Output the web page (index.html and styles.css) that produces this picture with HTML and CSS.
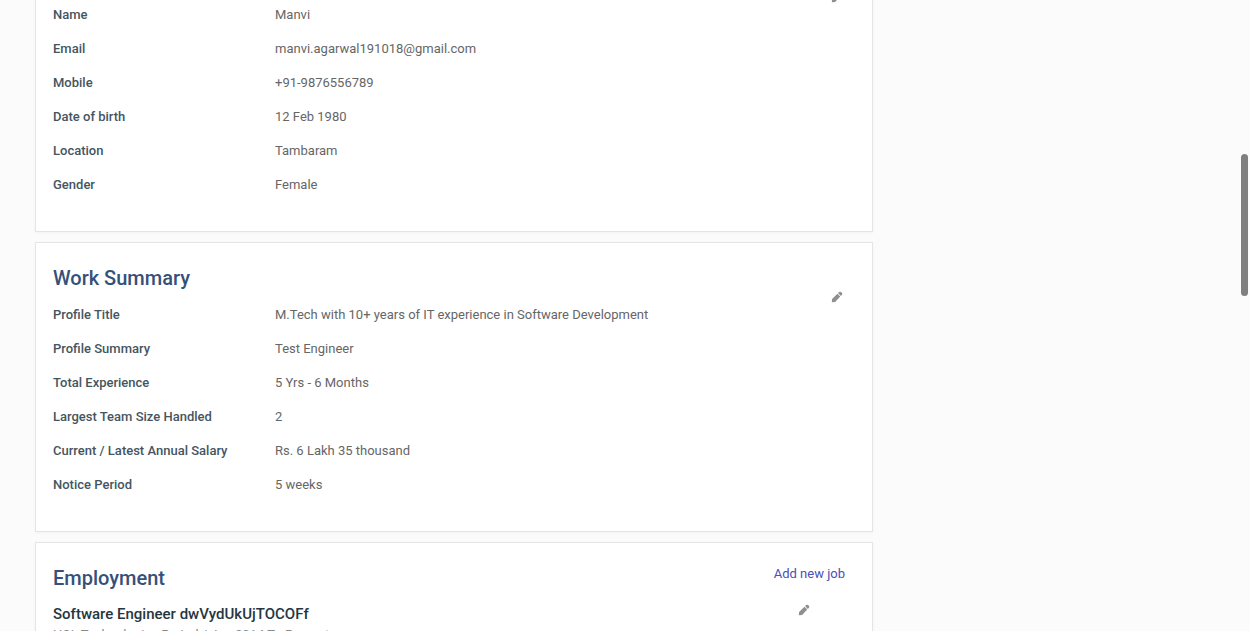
FILE: index.html
```html
<!DOCTYPE html>
<html lang="en">
<head>
<meta charset="utf-8">
<title>Profile</title>
<link rel="stylesheet" href="styles.css">
</head>
<body>
<svg class="defs"><symbol id="pencil" viewBox="0 0 12 12"><path d="M.8 11.2 1.1 7.9 6.4 2.7 9.3 5.6 4.1 10.9ZM7 2.1 8.3 1Q9.3.4 10.1 1.1L11 2Q11.7 2.8 11 3.7L9.9 5Z"/></symbol></svg>
<main class="profile">
  <section class="card personal">
    <dl class="rows">
      <dt>Name</dt><dd>Manvi</dd>
      <dt>Email</dt><dd>manvi.agarwal191018@gmail.com</dd>
      <dt>Mobile</dt><dd>+91-9876556789</dd>
      <dt>Date of birth</dt><dd>12 Feb 1980</dd>
      <dt>Location</dt><dd>Tambaram</dd>
      <dt>Gender</dt><dd>Female</dd>
    </dl>
    <svg class="edit"><use href="#pencil"/></svg>
  </section>
  <section class="card summary">
    <h2>Work Summary</h2>
    <dl class="rows">
      <dt>Profile Title</dt><dd>M.Tech with 10+ years of IT experience in Software Development</dd>
      <dt>Profile Summary</dt><dd>Test Engineer</dd>
      <dt>Total Experience</dt><dd>5 Yrs - 6 Months</dd>
      <dt>Largest Team Size Handled</dt><dd>2</dd>
      <dt>Current / Latest Annual Salary</dt><dd>Rs. 6 Lakh 35 thousand</dd>
      <dt>Notice Period</dt><dd>5 weeks</dd>
    </dl>
    <svg class="edit"><use href="#pencil"/></svg>
  </section>
  <section class="card employment">
    <header class="card-head"><h2>Employment</h2><a class="add">Add new job</a></header>
    <div class="job-head"><h3>Software Engineer dwVydUkUjTOCOFf</h3><svg class="job-edit"><use href="#pencil"/></svg></div>
    <p class="company">HCL Technologies Period / Jun 2014 To Present</p>
  </section>
</main>
<div class="scroll-thumb"></div>
</body>
</html>
```
FILE: styles.css
```css
* { box-sizing: border-box; }
html { height: 100%; overflow: hidden; }
body {
  margin: 0;
  height: 631px;
  overflow: hidden;
  background: #fbfbfb;
  font-family: Roboto, "Liberation Sans", sans-serif;
  font-size: 13px;
  color: #666;
}
.defs { display: none; }
svg { fill: #8f8f8f; }
.profile { display: flex; flex-direction: column; gap: 10px; width: 838px; height: 631px; margin-left: 35px; }
.card {
  position: relative;
  flex: none;
  padding: 18px 27px 0 17px;
  background: #fff;
  border: 1px solid #e4e5e7;
  box-shadow: 0 1px 3px rgba(0, 0, 0, .04);
}
.personal { height: 232px; padding-top: 0; border-top: 0; }
.personal .rows { margin-top: -2px; }
.summary { height: 290px; }
.employment { height: 89px; border-bottom: 0; overflow: hidden; }
h2, h3, dl, dd, p { margin: 0; }
h2 { font-size: 20px; line-height: 34px; font-weight: 500; color: #36507a; }
.rows { display: grid; grid-template-columns: 222px 1fr; grid-auto-rows: 34px; line-height: 34px; }
.summary .rows { margin-top: 3px; }
dt { font-weight: 500; color: #45555f; }
.edit { position: absolute; right: 29px; top: 48px; width: 12px; height: 12px; }
.personal .edit { top: -9px; }
.card-head, .job-head { display: flex; justify-content: space-between; }
.add { color: #4d4db8; line-height: 25px; }
.job-head { align-items: flex-start; padding-right: 35px; }
h3 { font-size: 15px; line-height: 38px; font-weight: 500; color: #263640; }
.job-edit { width: 12px; height: 12px; margin-top: 9px; }
.company { margin-top: -8px; line-height: 20px; color: #888; }
.scroll-thumb { position: absolute; left: 1241px; top: 154px; width: 7px; height: 142px; border-radius: 4px; background: #7f7f7f; }
```
